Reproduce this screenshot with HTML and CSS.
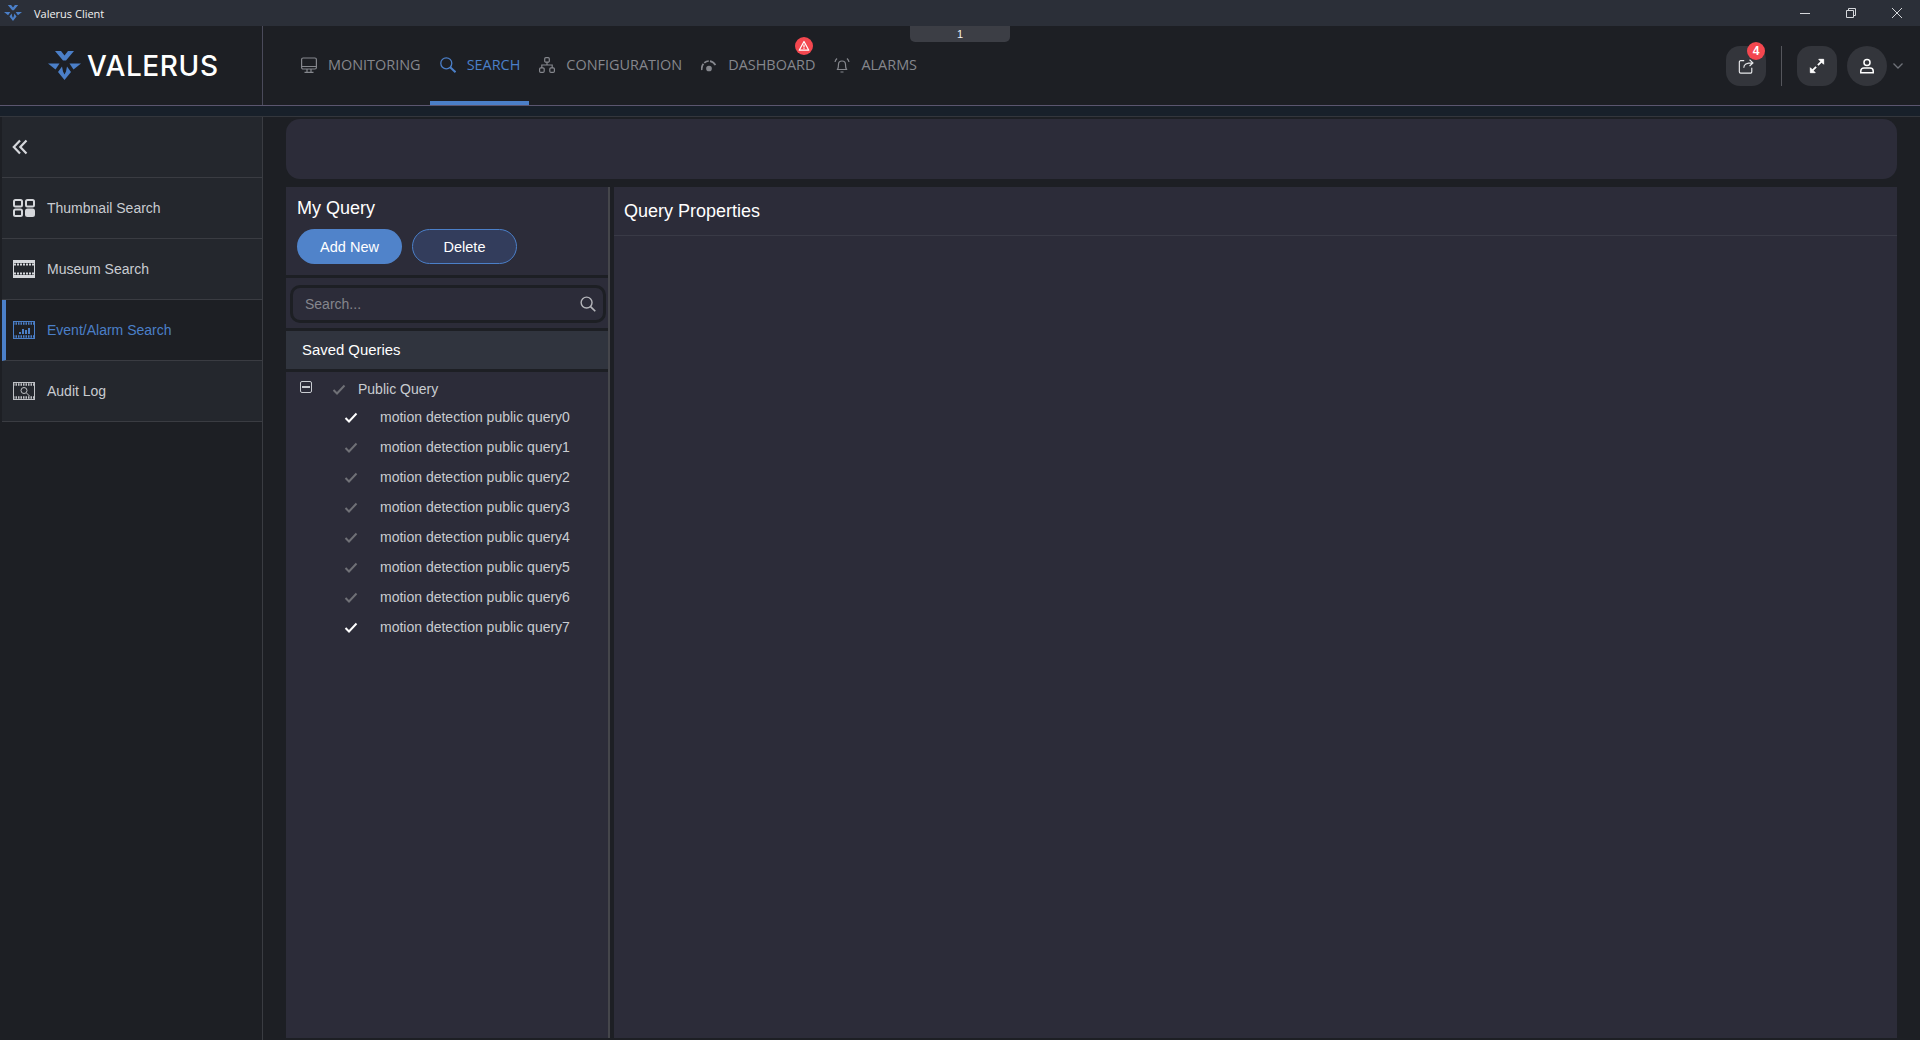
FILE: index.html
```html
<!DOCTYPE html>
<html lang="en">
  <head>
    <meta charset="UTF-8" />
    <meta name="viewport" content="width=device-width, initial-scale=1.0" />
    <title>Valerus Client</title>

    <link rel="stylesheet" href="styles.css">
  </head>
  <body>
    <svg class="icon-defs" width="0" height="0">
      <defs>
        <symbol id="logo-mark" viewBox="0 0 33 29">
          <path d="M7 0h6l3.500 4.500L20 0h6l-8 9.500h-3z" />
          <path d="M0 12.500h11.500l-4 6z" />
          <path d="M33 12.500H21.500l4 6z" />
          <path d="M16.500 29L10 21l4-5.500 1 5 1.500 3 1.500-3 1-5 4 5.500z" />
        </symbol>
        <symbol id="check" viewBox="0 0 14 11">
          <path d="M1.500 6l3.500 3.500 7.500-8" fill="none" stroke="currentColor" stroke-width="2" />
        </symbol>
      </defs>
    </svg>

    <!-- Window title bar -->
    <div class="titlebar">
      <svg class="titlebar-logo"><use href="#logo-mark" /></svg>
      <span class="titlebar-text">Valerus Client</span>
      <div class="window-controls">
        <svg width="12" height="12" viewBox="0 0 12 12"><path d="M1 6.500h10" stroke="#d5d7db" fill="none" /></svg>
        <svg width="12" height="12" viewBox="0 0 12 12"><path d="M3.500 3V1.500h7v7H9M1.500 3.500h7v7h-7z" stroke="#d5d7db" fill="none" /></svg>
        <svg width="12" height="12" viewBox="0 0 12 12"><path d="M1 1l10 10M11 1L1 11" stroke="#d5d7db" fill="none" /></svg>
      </div>
    </div>

    <!-- Top header -->
    <header class="header">
      <div class="brand">
        <svg class="brand-logo"><use href="#logo-mark" /></svg>
        <span class="brand-name">VALERUS</span>
      </div>

      <nav class="nav">
        <a class="nav-item">
          <svg viewBox="1 1 16 16" fill="none" stroke="currentColor" stroke-width="1.200"><rect x="1.600" y="2" width="14.800" height="11" rx="1.500" /><path d="M1.500 10.500h15M7 13v3M11 13v3M4.500 16.400h9" /></svg>
          MONITORING
        </a>
        <a class="nav-item nav-item-active">
          <svg viewBox="1 1 16 16" fill="none" stroke="currentColor" stroke-width="1.300"><circle cx="7.300" cy="7.300" r="5.500" /><path d="M11.200 11.200l5.300 5" stroke-width="2" /></svg>
          SEARCH
        </a>
        <a class="nav-item">
          <svg viewBox="1 1 16 16" fill="none" stroke="currentColor" stroke-width="1.200"><rect x="6.700" y="1.600" width="4.600" height="4.600" rx="1.200" /><rect x="1.600" y="11.800" width="4.600" height="4.600" rx="1.200" /><rect x="11.800" y="11.800" width="4.600" height="4.600" rx="1.200" /><path d="M9 6v3M3.800 12V9h10.400v3" /></svg>
          CONFIGURATION
        </a>
        <a class="nav-item">
          <svg viewBox="1 1 16 16" fill="none" stroke="currentColor" stroke-width="1.700"><path d="M1.800 14C1 9 5 5 9 5s8 4 7.200 9" stroke-dasharray="6.500 1.200 5 1.200 7" /><circle cx="9" cy="12.500" r="2" fill="currentColor" /></svg>
          DASHBOARD
          <span class="alert-badge">
            <svg viewBox="0 0 12 12" fill="none" stroke="#fff" stroke-width="1.200"><path d="M6 1.500l4.800 8.700H1.200z" stroke-linejoin="round" /><path d="M6 4.500v3M6 8.300v.8" /></svg>
          </span>
        </a>
        <a class="nav-item">
          <svg viewBox="1 1 16 16" fill="none" stroke="currentColor" stroke-width="1.200"><path d="M4.500 13.500c1-1.500 1-3 1-5 0-2 1.500-3.500 3.500-3.500s3.500 1.500 3.500 3.500c0 2 0 3.500 1 5z" /><path d="M7.500 16h3M2 6c.3-1.500 1-2.500 2-3.500M16 6c-.3-1.500-1-2.500-2-3.500" /></svg>
          ALARMS
        </a>
      </nav>

      <div class="screen-tab">1</div>

      <div class="header-actions">
        <button class="action-btn">
          <svg viewBox="0 0 18 18" fill="none" stroke="#e8e9eb" stroke-width="1.300"><path d="M7 3H3a1.500 1.500 0 0 0-1.500 1.500v11A1.500 1.500 0 0 0 3 17h11a1.500 1.500 0 0 0 1.500-1.500V11" /><path d="M6.500 11c0-4 3-5.500 10-5.500M13 2l3.800 3.500L13 9" /></svg>
          <span class="count-badge">4</span>
        </button>
        <span class="action-divider"></span>
        <button class="action-btn">
          <svg viewBox="0 0 18 18" fill="#fff" stroke="#fff"><path d="M11 1.500h5.500V7zM7 16.500H1.500V11z" /><path d="M14 4l-4 4M8 10l-4 4" stroke-width="2" /></svg>
        </button>
        <button class="action-btn action-btn-round">
          <svg viewBox="0 0 18 18" fill="none" stroke="#fff" stroke-width="1.700"><circle cx="9" cy="5" r="3.400" /><path d="M2 16.500v-1.800c0-2 1.500-3.500 3.500-3.500h7c2 0 3.500 1.500 3.500 3.500v1.800z" /></svg>
        </button>
        <svg class="caret" width="10" height="6" viewBox="0 0 10 6" fill="none" stroke="#6f7279" stroke-width="1.300"><path d="M.5.500L5 5 9.500.5" /></svg>
      </div>
    </header>
    <div class="header-strip"></div>

    <div class="app-body">
      <!-- Side menu -->
      <aside class="sidebar">
        <div class="sidebar-toggle">
          <svg width="16" height="16" viewBox="0 0 16 16" fill="none" stroke="#d5d7db" stroke-width="2.200"><path d="M8 1.500L1.800 8 8 14.500M14.500 1.500L8.300 8l6.200 6.500" /></svg>
        </div>
        <a class="side-item">
          <svg width="22" height="18" viewBox="0 0 22 18" fill="none" stroke="#d5d7db" stroke-width="2"><rect x="1" y="1" width="8" height="6.500" rx="1.500" /><rect x="13" y="1" width="8" height="6.500" rx="1.500" /><rect x="1" y="10.500" width="8" height="6.500" rx="1.500" /><rect x="13" y="10.500" width="8" height="6.500" rx="1.500" fill="#d5d7db" /></svg>
          Thumbnail Search
        </a>
        <a class="side-item">
          <svg width="22" height="18" viewBox="0 0 22 18"><rect width="22" height="18" fill="#d5d7db" /><rect x="1" y="3" width="20" height="12" fill="#24272d" /><path d="M1 4.500h20M1 13.500h20" stroke="#d5d7db" stroke-width="2" stroke-dasharray="2 1" /></svg>
          Museum Search
        </a>
        <a class="side-item side-item-active">
          <svg width="22" height="18" viewBox="0 0 22 18" fill="none" stroke="#4b7fc8"><rect x=".500" y=".500" width="21" height="17" /><path d="M0 2.500h22M0 15.500h22" stroke-width="2.500" stroke-dasharray="1.500 1" /><path d="M7 13v-2M10 13V8M13 13V9M16 13V7" stroke-width="2" /></svg>
          Event/Alarm Search
        </a>
        <a class="side-item">
          <svg width="22" height="18" viewBox="0 0 22 18" fill="none" stroke="#bfc1c5"><rect x=".500" y=".500" width="21" height="17" /><path d="M0 2.500h22M0 15.500h22" stroke-width="2.500" stroke-dasharray="1.500 1" /><circle cx="11" cy="8.500" r="3" /><path d="M13.500 11l3 3" /></svg>
          Audit Log
        </a>
      </aside>

      <main class="content">
        <div class="filter-bar"></div>

        <div class="panels">
          <section class="query-panel">
            <div class="query-head">
              <h2 class="query-title">My Query</h2>
              <div class="query-buttons">
                <button class="btn btn-primary">Add New</button>
                <button class="btn btn-outline">Delete</button>
              </div>
            </div>

            <div class="query-search">
              <div class="search-box">
                <span class="search-placeholder">Search...</span>
                <svg width="16" height="16" viewBox="0 0 17 17" fill="none" stroke="#b4b5ba" stroke-width="1.500"><circle cx="7" cy="7" r="5.800" /><path d="M11.200 11.200l5 5" stroke-width="1.800" /></svg>
              </div>
            </div>

            <div class="saved-title">Saved Queries</div>

            <div class="tree">
              <div class="tree-root">
                <span class="tree-toggle"></span>
                <svg class="tick" width="14" height="11"><use href="#check" /></svg>
                <span class="tree-root-label">Public Query</span>
              </div>
              <ul class="tree-list">
                <li class="tree-leaf tree-leaf-on"><svg class="tick" width="14" height="11"><use href="#check" /></svg>motion detection public query0</li>
                <li class="tree-leaf"><svg class="tick" width="14" height="11"><use href="#check" /></svg>motion detection public query1</li>
                <li class="tree-leaf"><svg class="tick" width="14" height="11"><use href="#check" /></svg>motion detection public query2</li>
                <li class="tree-leaf"><svg class="tick" width="14" height="11"><use href="#check" /></svg>motion detection public query3</li>
                <li class="tree-leaf"><svg class="tick" width="14" height="11"><use href="#check" /></svg>motion detection public query4</li>
                <li class="tree-leaf"><svg class="tick" width="14" height="11"><use href="#check" /></svg>motion detection public query5</li>
                <li class="tree-leaf"><svg class="tick" width="14" height="11"><use href="#check" /></svg>motion detection public query6</li>
                <li class="tree-leaf tree-leaf-on"><svg class="tick" width="14" height="11"><use href="#check" /></svg>motion detection public query7</li>
              </ul>
            </div>
          </section>

          <section class="props-panel">
            <h2 class="props-title">Query Properties</h2>
          </section>
        </div>
      </main>
    </div>
  </body>
</html>
```

FILE: styles.css
```css
* {
  box-sizing: border-box;
}

html,
body {
  height: 100%;
}

body {
  margin: 0;
  display: flex;
  flex-direction: column;
  height: 1040px;
  overflow: hidden;
  background: #1d1f24;
  color: #fff;
  font-family: "Liberation Sans", Arial, sans-serif;
}

.icon-defs {
  position: absolute;
}

/* Title bar */
.titlebar {
  display: flex;
  align-items: center;
  flex: 0 0 26px;
  background: #2b2f38;
}

.titlebar-logo {
  width: 18px;
  height: 16px;
  margin-left: 4px;
  fill: #4b7fc8;
}

.titlebar-text {
  margin-left: 12px;
  font-family: "Open Sans", sans-serif;
  font-size: 11px;
  color: #f2f2f2;
}

.window-controls {
  display: flex;
  gap: 34px;
  margin-left: auto;
  margin-right: 17px;
}

/* Header */
.header {
  position: relative;
  display: flex;
  flex: 0 0 79px;
  background: #1d1f24;
  border-bottom: 1px solid #5b566f;
}

.brand {
  display: flex;
  align-items: center;
  gap: 6px;
  width: 263px;
  padding-left: 48px;
  border-right: 1px solid #4a4a5a;
}

.brand-logo {
  width: 33px;
  height: 29px;
  fill: #4b7fc8;
}

.brand-name {
  font-family: Inter, sans-serif;
  font-size: 28px;
  font-weight: 500;
  letter-spacing: 0.6px;
}

.nav {
  display: flex;
  margin-left: 28px;
}

.nav-item {
  position: relative;
  display: flex;
  align-items: center;
  gap: 11px;
  padding: 2px 9px 0 10px;
  height: 79px;
  border-bottom: 4px solid transparent;
  font-family: "Open Sans", sans-serif;
  font-size: 14.450px;
  color: #85878d;
}

.nav-item svg {
  width: 16px;
  height: 16px;
}

.nav-item-active {
  color: #4b7fc8;
  border-bottom-color: #4b7fc8;
}

.alert-badge {
  position: absolute;
  top: 11px;
  right: 11px;
  display: flex;
  align-items: center;
  justify-content: center;
  width: 18px;
  height: 18px;
  border-radius: 50%;
  background: #f4474f;
}

.nav-item .alert-badge svg {
  width: 12px;
  height: 12px;
}

.screen-tab {
  position: absolute;
  top: 0;
  left: 910px;
  width: 100px;
  height: 16px;
  border-radius: 0 0 5px 5px;
  background: #3c3e45;
  color: #f2f2f2;
  font-size: 11px;
  line-height: 16px;
  text-align: center;
}

.header-actions {
  display: flex;
  align-items: center;
  margin-left: auto;
  margin-right: 17px;
}

.action-btn {
  position: relative;
  display: flex;
  align-items: center;
  justify-content: center;
  width: 40px;
  height: 40px;
  padding: 0;
  border: 0;
  border-radius: 14px;
  background: #33353b;
}

.action-btn > svg {
  width: 16px;
  height: 16px;
}

.action-btn-round {
  margin-left: 10px;
  border-radius: 50%;
}

.action-divider {
  width: 1px;
  height: 40px;
  margin: 0 15px;
  background: #55565c;
}

.count-badge {
  position: absolute;
  top: -4px;
  right: 1px;
  width: 18px;
  height: 18px;
  border-radius: 50%;
  background: #f4474f;
  color: #fff;
  font-size: 12px;
  font-weight: 700;
  line-height: 18px;
  text-align: center;
}

.caret {
  margin-left: 6px;
}

.header-strip {
  flex: 0 0 11px;
  background: #18202a;
  border-bottom: 1px solid #33363c;
}

/* Body */
.app-body {
  display: flex;
  flex: 1;
  min-height: 0;
}

.sidebar {
  width: 261px;
  margin-left: 2px;
  background: #1d1f24;
  border-right: 1px solid #3a3c42;
}

.sidebar-toggle {
  display: flex;
  align-items: center;
  height: 61px;
  padding-left: 10px;
  background: #24272d;
  border-bottom: 1px solid #3a3c42;
}

.side-item {
  display: flex;
  align-items: center;
  gap: 12px;
  height: 61px;
  padding-left: 11px;
  background: #24272d;
  border-bottom: 1px solid #3a3c42;
  color: #c9ccd1;
  font-size: 14px;
}

.side-item-active {
  padding-left: 7px;
  background: #1d1f24;
  border-left: 4px solid #4b7fc8;
  color: #4b7fc8;
}

.content {
  display: flex;
  flex-direction: column;
  flex: 1;
  min-width: 0;
  gap: 8px;
  padding: 2px 23px;
}

.filter-bar {
  flex: 0 0 60px;
  border-radius: 14px;
  background: #2c2c39;
}

.panels {
  display: flex;
  flex: 1;
  min-height: 0;
}

/* Query list */
.query-panel {
  display: flex;
  flex-direction: column;
  flex: 0 0 324px;
  background: #2c2c39;
  border-right: 2px solid #45464b;
}

.query-head {
  height: 91px;
  padding: 10px 11px 0;
  border-bottom: 3px solid #1d1f24;
}

.query-title {
  margin: 0;
  font-size: 18px;
  font-weight: 400;
  line-height: 22px;
}

.query-buttons {
  display: flex;
  gap: 10px;
  margin-top: 10px;
}

.btn {
  width: 105px;
  height: 35px;
  padding: 0;
  border-radius: 18px;
  color: #fff;
  font-family: "Liberation Sans", Arial, sans-serif;
  font-size: 14.500px;
}

.btn-primary {
  border: 0;
  background: #5083ca;
}

.btn-outline {
  border: 1px solid #4b7fc8;
  background: #333d5c;
}

.query-search {
  height: 53px;
  padding: 7px 2px 0 4px;
  border-bottom: 3px solid #1d1f24;
}

.search-box {
  display: flex;
  align-items: center;
  justify-content: space-between;
  height: 38px;
  padding: 0 7px 0 12px;
  border: 3px solid #1d1f24;
  border-radius: 10px;
  background: #2c2c39;
}

.search-placeholder {
  color: #85868d;
  font-size: 14px;
}

.saved-title {
  height: 41px;
  padding: 0 16px;
  background: #30343e;
  border-bottom: 3px solid #1d1f24;
  font-size: 14.900px;
  line-height: 38px;
}

.tree {
  color: #c9ccd1;
  font-size: 14px;
}

.tree-root {
  display: flex;
  align-items: center;
  height: 30px;
  padding-top: 4px;
  padding-left: 14px;
}

.tree-root-label {
  margin-left: 12px;
}

.tree-toggle {
  position: relative;
  width: 12px;
  height: 12px;
  margin-top: -4px;
  margin-right: 20px;
  border: 1px solid #c9ccd1;
  border-radius: 2px;
}

.tree-toggle::after {
  content: "";
  position: absolute;
  left: 1px;
  right: 1px;
  top: 4px;
  height: 2px;
  background: #c9ccd1;
}

.tick {
  color: #6f7076;
}

.tree-list {
  margin: 0;
  padding: 0;
  list-style: none;
}

.tree-leaf {
  display: flex;
  align-items: center;
  gap: 22px;
  height: 30px;
  padding-left: 58px;
}

.tree-leaf-on .tick {
  color: #fff;
}

/* Properties */
.props-panel {
  flex: 1;
  margin-left: 4px;
  background: #2c2c39;
}

.props-title {
  margin: 0;
  height: 49px;
  padding: 0 10px;
  border-bottom: 1px solid #393a46;
  font-size: 18px;
  font-weight: 400;
  line-height: 48px;
}
```
